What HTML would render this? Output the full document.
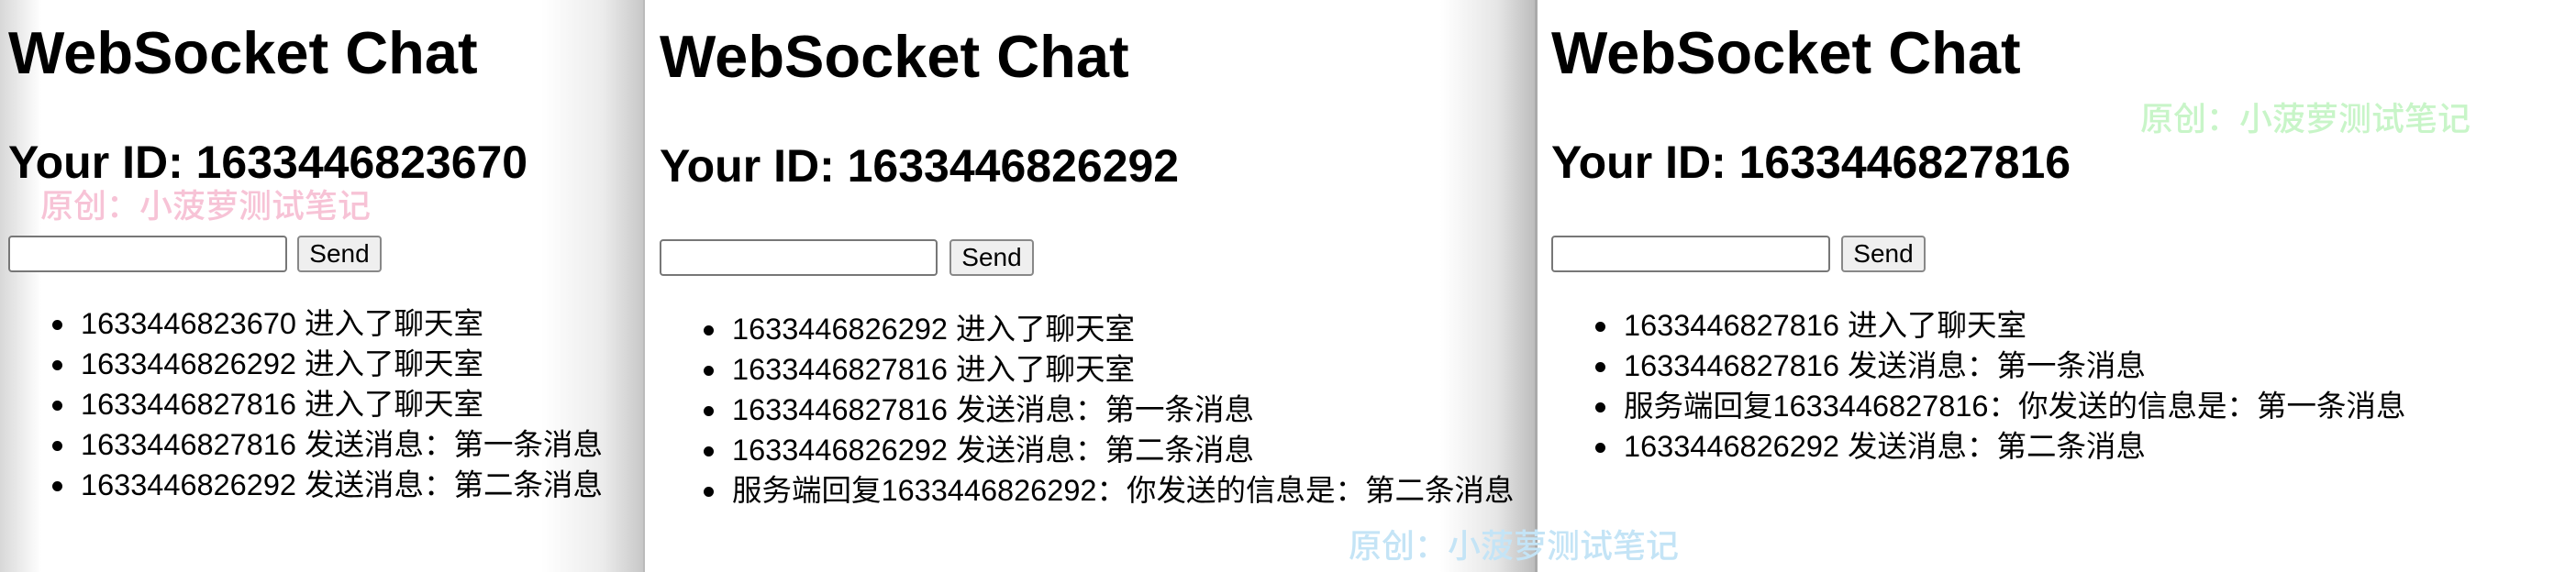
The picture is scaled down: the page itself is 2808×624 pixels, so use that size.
<!DOCTYPE html>
<html><head><meta charset="utf-8"><style>
*{margin:0;padding:0;box-sizing:border-box}
body{width:2808px;height:624px;overflow:hidden;background:#fff;position:relative;font-family:"Liberation Sans","Noto Sans CJK SC",sans-serif;color:#000}
.a{position:absolute;white-space:nowrap}
.h1{font-size:65px;line-height:64px;font-weight:bold}
.h2{font-size:50px;line-height:48px;font-weight:bold}
.li{font-size:32.5px;line-height:44px}
.li::before{content:"";position:absolute;left:-31px;top:18px;width:11px;height:11px;border-radius:50%;background:#000}
.in{border:2px solid #777;border-radius:4px;background:#fff;height:40px}
.bt{border:2px solid #888;border-radius:4px;background:#efefef;height:40px;width:92px;font-size:28px;line-height:36px;text-align:center}
.wm{font-size:36px;line-height:36px;font-family:"Noto Sans CJK SC",sans-serif;font-weight:500}
</style></head><body>
<div class="a" style="left:0;top:0;width:45px;height:624px;background:linear-gradient(90deg,#d8d8d8,#fff)"></div>
<div class="a" style="left:590px;top:0;width:111px;height:624px;background:linear-gradient(90deg,#fff,#ececec 60%,#c8c8c8)"></div>
<div class="a" style="left:701px;top:0;width:2px;height:624px;background:#bbb"></div>
<div class="a" style="left:1570px;top:0;width:103px;height:624px;background:linear-gradient(90deg,#fff,#e6e6e6 60%,#bdbdbd)"></div>
<div class="a" style="left:1673px;top:0;width:3px;height:624px;background:#aaa"></div>

<!-- panel 1 -->
<div class="a h1" style="left:9px;top:26px">WebSocket Chat</div>
<div class="a h2" style="left:9px;top:153px">Your ID: 1633446823670</div>
<div class="a in" style="left:9px;top:257px;width:304px"></div>
<div class="a bt" style="left:324px;top:257px">Send</div>
<div class="a li" style="left:88px;top:331px">1633446823670 进入了聊天室</div>
<div class="a li" style="left:88px;top:375px">1633446826292 进入了聊天室</div>
<div class="a li" style="left:88px;top:419px">1633446827816 进入了聊天室</div>
<div class="a li" style="left:88px;top:463px">1633446827816 发送消息：第一条消息</div>
<div class="a li" style="left:88px;top:507px">1633446826292 发送消息：第二条消息</div>

<!-- panel 2 -->
<div class="a h1" style="left:719px;top:30px">WebSocket Chat</div>
<div class="a h2" style="left:719px;top:157px">Your ID: 1633446826292</div>
<div class="a in" style="left:719px;top:261px;width:303px"></div>
<div class="a bt" style="left:1035px;top:261px">Send</div>
<div class="a li" style="left:798px;top:337px">1633446826292 进入了聊天室</div>
<div class="a li" style="left:798px;top:381px">1633446827816 进入了聊天室</div>
<div class="a li" style="left:798px;top:425px">1633446827816 发送消息：第一条消息</div>
<div class="a li" style="left:798px;top:469px">1633446826292 发送消息：第二条消息</div>
<div class="a li" style="left:798px;top:513px">服务端回复1633446826292：你发送的信息是：第二条消息</div>

<!-- panel 3 -->
<div class="a h1" style="left:1691px;top:26px">WebSocket Chat</div>
<div class="a h2" style="left:1691px;top:153px">Your ID: 1633446827816</div>
<div class="a in" style="left:1691px;top:257px;width:304px"></div>
<div class="a bt" style="left:2007px;top:257px">Send</div>
<div class="a li" style="left:1770px;top:333px">1633446827816 进入了聊天室</div>
<div class="a li" style="left:1770px;top:377px">1633446827816 发送消息：第一条消息</div>
<div class="a li" style="left:1770px;top:421px">服务端回复1633446827816：你发送的信息是：第一条消息</div>
<div class="a li" style="left:1770px;top:465px">1633446826292 发送消息：第二条消息</div>

<!-- watermarks -->
<div class="a wm" style="left:44px;top:204px;color:#f7c3d6">原创：小菠萝测试笔记</div>
<div class="a wm" style="left:2333px;top:109px;color:#c8f5c8">原创：小菠萝测试笔记</div>
<div class="a wm" style="left:1470px;top:575px;color:#c4e4f6">原创：小菠萝测试笔记</div>
</body></html>
